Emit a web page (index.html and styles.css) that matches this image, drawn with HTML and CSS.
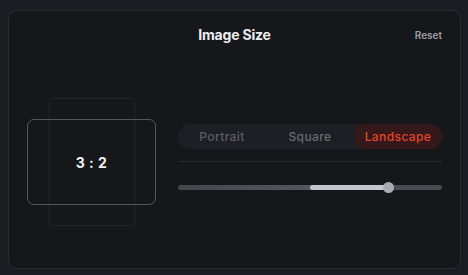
FILE: index.html
```html
<!DOCTYPE html>
<html lang="en">

<head>
    <meta charset="UTF-8">
    <meta name="viewport" content="width=device-width, initial-scale=1.0">
    <title>Image Size</title>
    <link rel="stylesheet" href="styles.css">
</head>

<body>
    <div class="card">
        <div class="card-header">
            <h1 class="title">Image Size</h1>
            <button class="reset-btn">Reset</button>
        </div>

        <div class="card-body">
            <div class="preview">
                <div class="preview-portrait"></div>
                <div class="preview-landscape">3 : 2</div>
            </div>

            <div class="controls">
                <div class="tabs">
                    <button class="tab">Portrait</button>
                    <button class="tab">Square</button>
                    <button class="tab active">Landscape</button>
                </div>
                <div class="divider"></div>
                <div class="slider">
                    <div class="slider-fill" style="left: 50%; width: 29.7%;"></div>
                    <div class="slider-thumb" style="left: 79.7%;"></div>
                </div>
            </div>
        </div>
    </div>
</body>

</html>
```

FILE: styles.css
```css
* {
    box-sizing: border-box;
}

body {
    margin: 0;
    height: 275px;
    background-color: #1c1d22;
    font-family: "Inter", "Noto Sans", sans-serif;
    overflow: hidden;
}

.card {
    width: 453px;
    height: 259px;
    margin: 10px 0 0 8px;
    padding: 14px 18px 0 18px;
    background-color: #16171b;
    border: 1px solid #2a2b31;
    border-radius: 9px;
}

.card-header {
    position: relative;
    height: 20px;
    display: flex;
    justify-content: center;
    align-items: center;
}

.title {
    margin: 0;
    font-size: 14px;
    font-weight: 700;
    line-height: 20px;
    color: #ececef;
    letter-spacing: -0.2px;
}

.reset-btn {
    position: absolute;
    right: 0;
    top: 4px;
    padding: 0;
    border: none;
    background: none;
    font-family: inherit;
    font-size: 10px;
    font-weight: 600;
    color: #9d9ea5;
    cursor: pointer;
}

.card-body {
    display: flex;
    align-items: flex-start;
    gap: 22px;
    margin-top: 53px;
}

.preview {
    position: relative;
    display: flex;
    align-items: center;
    justify-content: center;
    width: 129px;
    height: 128px;
    flex-shrink: 0;
}

.preview-portrait {
    position: absolute;
    left: 22px;
    top: 0;
    width: 86px;
    height: 128px;
    border: 1px solid #232429;
    border-radius: 2px;
}

.preview-landscape {
    position: relative;
    display: flex;
    align-items: center;
    justify-content: center;
    width: 129px;
    height: 86px;
    border: 1px solid #55565c;
    border-radius: 7px;
    font-size: 14px;
    font-weight: 700;
    color: #f0f0f2;
    letter-spacing: 0.5px;
}

.controls {
    width: 266px;
    margin-top: 26px;
}

.tabs {
    display: flex;
    height: 25px;
    background-color: #1e1f24;
    border-radius: 13px;
}

.tab {
    flex: 1;
    border: none;
    background: none;
    border-radius: 13px;
    font-family: inherit;
    font-size: 12px;
    font-weight: 500;
    letter-spacing: 0.4px;
    color: #5c5d63;
    cursor: pointer;
}

.tab:nth-child(2) {
    color: #696a70;
}

.tab.active {
    background-color: #35191a;
    color: #e5462c;
}

.divider {
    height: 1px;
    margin-top: 12px;
    background-color: #2a2b30;
}

.slider {
    position: relative;
    height: 5px;
    margin-top: 23px;
    background: linear-gradient(to right, #45464c, #55565c 50%, #4a4b51 50%);
    border-radius: 3px;
}

.slider-fill {
    position: absolute;
    top: 0;
    height: 5px;
    background-color: #c4c6cb;
    border-radius: 3px;
}

.slider-thumb {
    position: absolute;
    top: -3px;
    width: 11px;
    height: 11px;
    margin-left: -5px;
    background-color: #aaacb2;
    border-radius: 50%;
}
```
